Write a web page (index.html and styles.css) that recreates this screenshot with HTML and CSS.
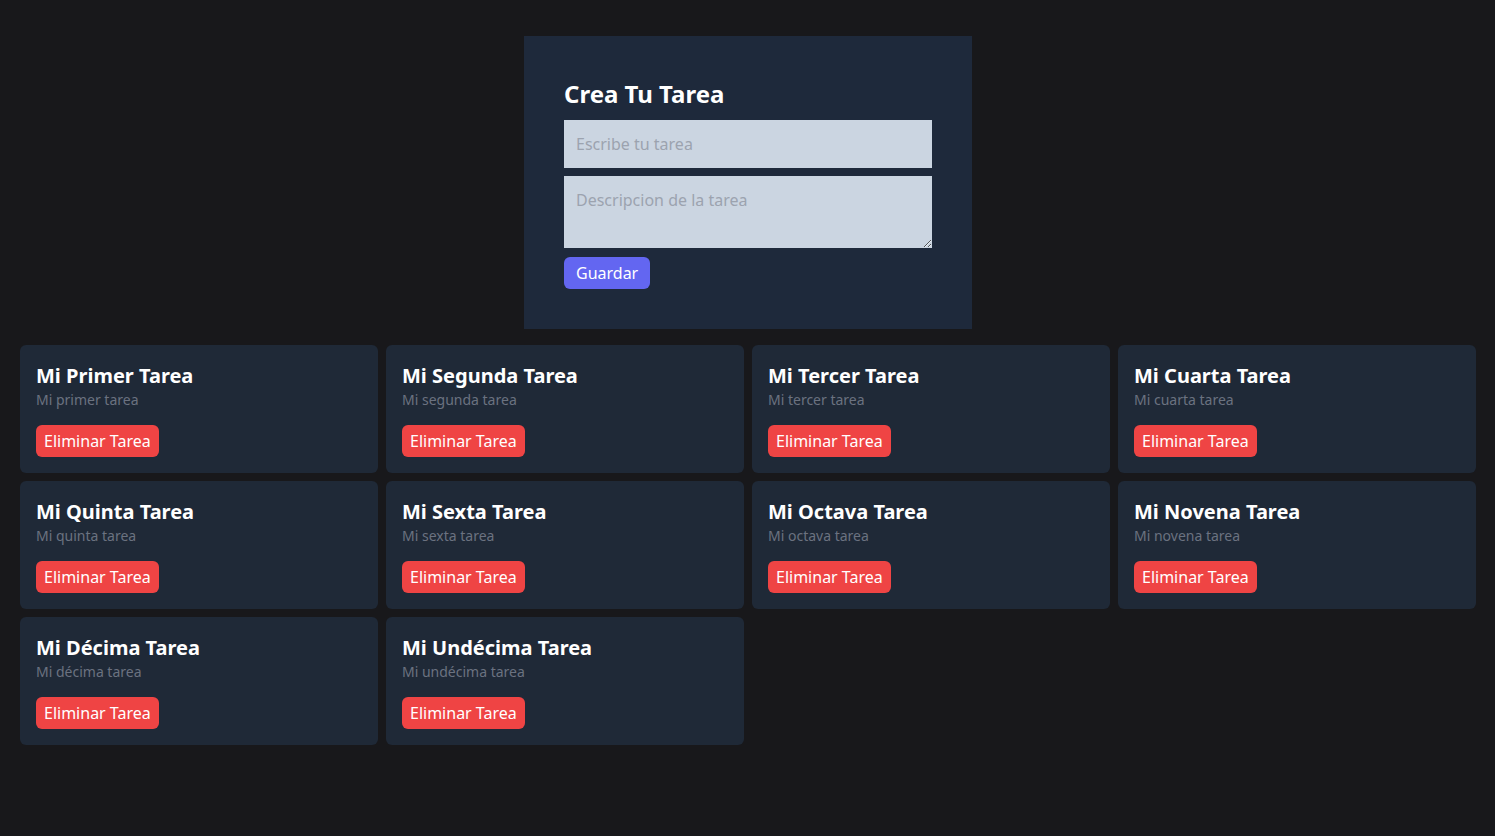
FILE: index.html
```html
<!DOCTYPE html>
<html lang="es">
<head>
<meta charset="utf-8">
<title>Tareas</title>
<link rel="stylesheet" href="styles.css">
</head>
<body>
<main class="page">
  <form class="task-form">
    <h1 class="form-title">Crea Tu Tarea</h1>
    <input class="field" type="text" placeholder="Escribe tu tarea">
    <textarea class="field area" placeholder="Descripcion de la tarea"></textarea>
    <button type="button" class="btn-save">Guardar</button>
  </form>
  <section class="grid">
    <div class="card"><h2 class="card-title">Mi Primer Tarea</h2><p class="card-desc">Mi primer tarea</p><button class="btn-del">Eliminar Tarea</button></div>
    <div class="card"><h2 class="card-title">Mi Segunda Tarea</h2><p class="card-desc">Mi segunda tarea</p><button class="btn-del">Eliminar Tarea</button></div>
    <div class="card"><h2 class="card-title">Mi Tercer Tarea</h2><p class="card-desc">Mi tercer tarea</p><button class="btn-del">Eliminar Tarea</button></div>
    <div class="card"><h2 class="card-title">Mi Cuarta Tarea</h2><p class="card-desc">Mi cuarta tarea</p><button class="btn-del">Eliminar Tarea</button></div>
    <div class="card"><h2 class="card-title">Mi Quinta Tarea</h2><p class="card-desc">Mi quinta tarea</p><button class="btn-del">Eliminar Tarea</button></div>
    <div class="card"><h2 class="card-title">Mi Sexta Tarea</h2><p class="card-desc">Mi sexta tarea</p><button class="btn-del">Eliminar Tarea</button></div>
    <div class="card"><h2 class="card-title">Mi Octava Tarea</h2><p class="card-desc">Mi octava tarea</p><button class="btn-del">Eliminar Tarea</button></div>
    <div class="card"><h2 class="card-title">Mi Novena Tarea</h2><p class="card-desc">Mi novena tarea</p><button class="btn-del">Eliminar Tarea</button></div>
    <div class="card"><h2 class="card-title">Mi Décima Tarea</h2><p class="card-desc">Mi décima tarea</p><button class="btn-del">Eliminar Tarea</button></div>
    <div class="card"><h2 class="card-title">Mi Undécima Tarea</h2><p class="card-desc">Mi undécima tarea</p><button class="btn-del">Eliminar Tarea</button></div>
  </section>
</main>
</body>
</html>
```

FILE: styles.css
```css
* { box-sizing: border-box; }
html, body {
  margin: 0;
  padding: 0;
  background: #18181b;
  font-family: "Noto Sans", "Open Sans", sans-serif;
  font-size: 16px;
  line-height: 24px;
  color: #fff;
}
.page {
  padding: 36px 19px 0 20px;
}
.task-form {
  width: 448px;
  margin: 0 auto 16px;
  padding: 40px;
  background: #1e293b;
  display: flex;
  flex-direction: column;
  align-items: flex-start;
}
.form-title {
  margin: 2px 0 10px;
  font-size: 24px;
  line-height: 32px;
  font-weight: 700;
  color: #fff;
}
.field {
  display: block;
  width: 100%;
  margin: 0 0 8px;
  padding: 12px;
  border: 0;
  background: #cbd5e1;
  font-family: inherit;
  font-size: 16px;
  line-height: 24px;
  color: #111827;
  outline: none;
}
.field::placeholder { color: #9ca3af; }
.area {
  height: 72px;
  margin-bottom: 9px;
}
.btn-save {
  padding: 4px 12px;
  border: 0;
  border-radius: 6px;
  background: #6366f1;
  color: #fff;
  font-family: inherit;
  font-size: 16px;
  line-height: 24px;
}
.grid {
  display: grid;
  grid-template-columns: repeat(4, 1fr);
  gap: 8px;
}
.card {
  background: #1f2937;
  border-radius: 6px;
  padding: 17px 16px 16px;
  display: flex;
  flex-direction: column;
  align-items: flex-start;
}
.card-title {
  margin: 0;
  font-size: 20px;
  line-height: 28px;
  font-weight: 700;
  color: #fff;
}
.card-desc {
  margin: 0 0 15px;
  font-size: 14px;
  line-height: 20px;
  color: #6b7280;
}
.btn-del {
  padding: 4px 8px;
  border: 0;
  border-radius: 6px;
  background: #ef4444;
  color: #fff;
  font-family: inherit;
  font-size: 16px;
  line-height: 24px;
}
```
